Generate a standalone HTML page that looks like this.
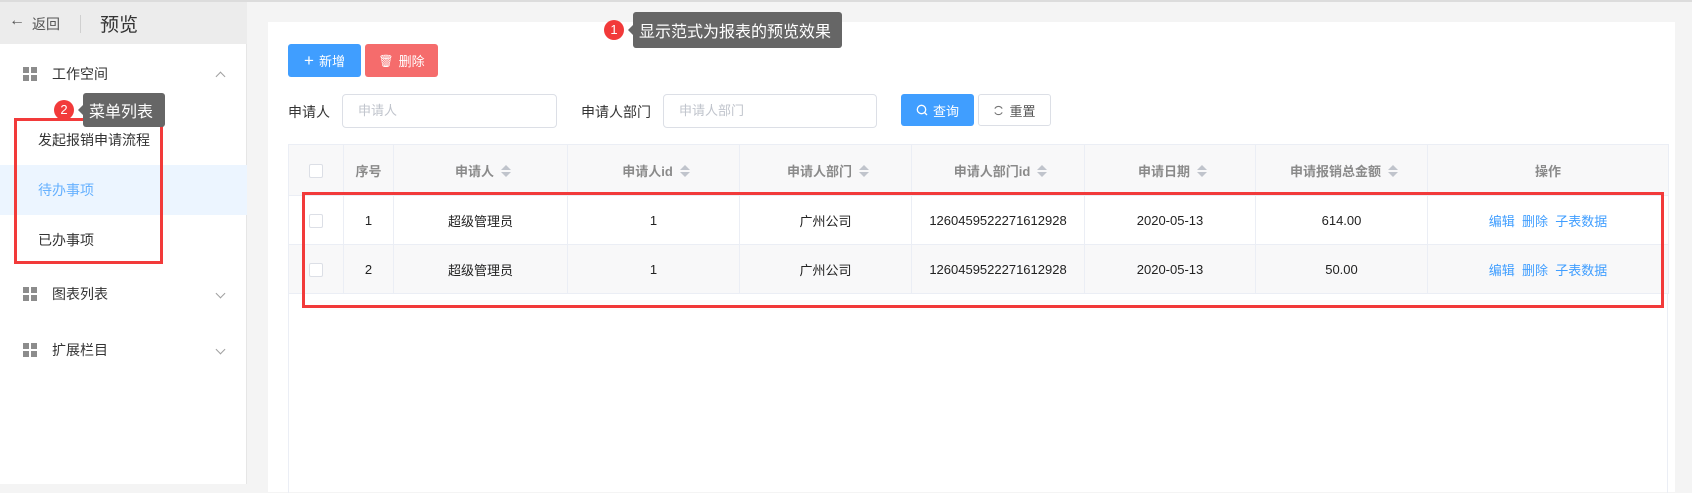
<!DOCTYPE html>
<html><head><meta charset="utf-8"><style>
*{box-sizing:border-box;margin:0;padding:0}
body{width:1692px;height:484px;overflow:hidden;background:#f4f4f4;font-family:"Liberation Sans","Noto Sans CJK SC",sans-serif;font-size:13px;color:#333;position:relative}
.abs{position:absolute}
.topline{left:0;top:0;width:1692px;height:2px;background:#dcdcdc}
.side{left:0;top:2px;width:247px;height:482px;background:#fff;border-right:1px solid #e6e6e6}
.shead{left:0;top:2px;width:247px;height:42px;background:#ececec}
.grid{width:14px;height:14px;display:grid;grid-template-columns:6px 6px;gap:2px}
.grid i{background:#8c8c8c;display:block}
.card{left:268px;top:22px;width:1407px;height:470px;background:#fff}
.btn{height:33px;border-radius:3px;color:#fff;font-size:13px;display:flex;align-items:center;justify-content:center;gap:5px}
.inp{height:34px;border:1px solid #dcdfe6;border-radius:4px;color:#c0c4cc;padding-left:15px;line-height:32px;font-size:13px}
table{border-collapse:collapse;table-layout:fixed}
td,th{border:1px solid #ebeef5;text-align:center;font-size:13px}
th{height:51px;background:#f8f8f9;color:#8a8a8a;font-weight:bold}
td{height:49px;color:#222}
tr.s td{background:#f8f8f9}
.cb{display:inline-block;width:14px;height:14px;border:1px solid #dcdfe6;border-radius:2px;background:#fff;vertical-align:middle}
.sort{display:inline-block;width:0;height:0;vertical-align:middle;margin-left:12px;position:relative;top:-1px}
.sort:before{content:"";position:absolute;left:-5px;top:-6px;border:5px solid transparent;border-bottom:5px solid #c0c4cc;border-top:0}
.sort:after{content:"";position:absolute;left:-5px;top:1px;border:5px solid transparent;border-top:5px solid #c0c4cc;border-bottom:0}
.lk{color:#409eff}
.badge{width:20px;height:20px;border-radius:50%;background:#f23a3a;color:#fff;font-size:13px;text-align:center;line-height:20px}
.tip{background:#666;color:#fff;font-size:16px;border-radius:3px;display:flex;align-items:center;padding-left:6px}
.tip:before{content:"";position:absolute;left:-5px;top:50%;margin-top:-5px;border:5px solid transparent;border-right:5px solid #666;border-left:0}
.red{border:3px solid #f23a3a}
.chev{width:7px;height:7px;border-left:1px solid #a0a0a0;border-top:1px solid #a0a0a0}
</style></head><body>
<div class="abs topline"></div>
<div class="abs side"></div>
<div class="abs shead"></div>
<div class="abs" style="left:9px;top:12px;font-size:16px;color:#555">←</div>
<div class="abs" style="left:32px;top:14px;font-size:14px;color:#555">返回</div>
<div class="abs" style="left:80px;top:15px;width:1px;height:18px;background:#d0d0d0"></div>
<div class="abs" style="left:100px;top:10px;font-size:19px;color:#333">预览</div>

<div class="abs grid" style="left:23px;top:67px"><i></i><i></i><i></i><i></i></div>
<div class="abs" style="left:52px;top:64px;font-size:14px">工作空间</div>
<div class="abs chev" style="left:217px;top:73px;transform:rotate(45deg)"></div>

<div class="abs" style="left:0;top:165px;width:247px;height:50px;background:#ecf5ff"></div>
<div class="abs" style="left:38px;top:130px;font-size:14px">发起报销申请流程</div>
<div class="abs" style="left:38px;top:180px;font-size:14px;color:#66b1ff">待办事项</div>
<div class="abs" style="left:38px;top:230px;font-size:14px">已办事项</div>

<div class="abs grid" style="left:23px;top:287px"><i></i><i></i><i></i><i></i></div>
<div class="abs" style="left:52px;top:284px;font-size:14px">图表列表</div>
<div class="abs chev" style="left:217px;top:290px;transform:rotate(225deg)"></div>
<div class="abs grid" style="left:23px;top:343px"><i></i><i></i><i></i><i></i></div>
<div class="abs" style="left:52px;top:340px;font-size:14px">扩展栏目</div>
<div class="abs chev" style="left:217px;top:346px;transform:rotate(225deg)"></div>

<div class="abs red" style="left:14px;top:118px;width:149px;height:146px"></div>
<div class="abs badge" style="left:54px;top:100px">2</div>
<div class="abs tip" style="left:83px;top:93px;width:82px;height:34px">菜单列表</div>

<div class="abs card"></div>
<div class="abs btn" style="left:288px;top:44px;width:73px;background:#409eff"><span style="font-size:17px;font-weight:300">+</span>新增</div>
<div class="abs btn" style="left:365px;top:44px;width:73px;background:#f56c6c"><span style="font-size:12px">🗑</span>删除</div>

<div class="abs" style="left:288px;top:102px;font-size:14px">申请人</div>
<div class="abs inp" style="left:342px;top:94px;width:215px">申请人</div>
<div class="abs" style="left:581px;top:102px;font-size:14px">申请人部门</div>
<div class="abs inp" style="left:663px;top:94px;width:214px">申请人部门</div>
<div class="abs btn" style="left:901px;top:94px;width:73px;height:32px;background:#409eff"><svg width="12" height="12" viewBox="0 0 12 12"><circle cx="5.5" cy="5.5" r="4.2" fill="none" stroke="#fff" stroke-width="1.3"/><path d="M8.5 8.5L11 11" stroke="#fff" stroke-width="1.3"/></svg>查询</div>
<div class="abs btn" style="left:978px;top:94px;width:73px;height:32px;background:#fff;border:1px solid #dcdfe6;color:#555"><svg width="11" height="11" viewBox="0 0 12 12"><path d="M10 4A4.5 4.5 0 0 0 2 4M2 8a4.5 4.5 0 0 0 8 0" fill="none" stroke="#777" stroke-width="1.2"/></svg>重置</div>

<table class="abs" style="left:288px;top:144px;width:1380px">
<colgroup><col style="width:55px"><col style="width:50px"><col style="width:174px"><col style="width:172px"><col style="width:172px"><col style="width:173px"><col style="width:171px"><col style="width:172px"><col style="width:241px"></colgroup>
<tr><th><span class="cb"></span></th><th>序号</th><th>申请人<span class="sort"></span></th><th>申请人id<span class="sort"></span></th><th>申请人部门<span class="sort"></span></th><th>申请人部门id<span class="sort"></span></th><th>申请日期<span class="sort"></span></th><th>申请报销总金额<span class="sort"></span></th><th>操作</th></tr>
<tr><td><span class="cb"></span></td><td>1</td><td>超级管理员</td><td>1</td><td>广州公司</td><td>1260459522271612928</td><td>2020-05-13</td><td>614.00</td><td><span class="lk">编辑&nbsp;&nbsp;删除&nbsp;&nbsp;子表数据</span></td></tr>
<tr class="s"><td><span class="cb"></span></td><td>2</td><td>超级管理员</td><td>1</td><td>广州公司</td><td>1260459522271612928</td><td>2020-05-13</td><td>50.00</td><td><span class="lk">编辑&nbsp;&nbsp;删除&nbsp;&nbsp;子表数据</span></td></tr>
</table>
<div class="abs" style="left:288px;top:293px;width:1px;height:200px;background:#ebeef5"></div>
<div class="abs" style="left:1667px;top:293px;width:1px;height:200px;background:#ebeef5"></div>

<div class="abs red" style="left:302px;top:192px;width:1362px;height:116px"></div>
<div class="abs badge" style="left:604px;top:20px">1</div>
<div class="abs tip" style="left:633px;top:12px;width:209px;height:36px">显示范式为报表的预览效果</div>
</body></html>
